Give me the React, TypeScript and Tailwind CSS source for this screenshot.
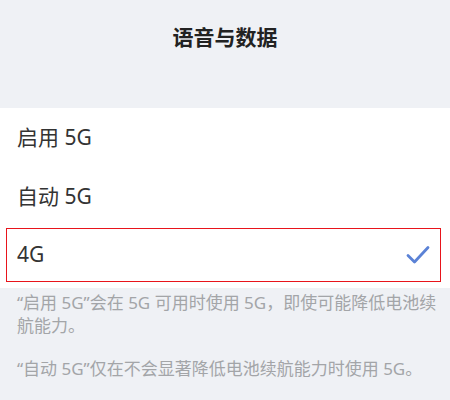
const font = { fontFamily: '"Noto Sans", "Noto Sans CJK SC", sans-serif' };

function Check() {
  return (
    <svg width="24" height="20" viewBox="0 0 24 20" fill="none">
      <path
        d="M2 10.5 L8.5 17 L22 2.5"
        stroke="#5b82d6"
        strokeWidth="2.8"
        strokeLinecap="round"
        strokeLinejoin="round"
      />
    </svg>
  );
}

const options = [
  { label: "启用 5G", selected: false },
  { label: "自动 5G", selected: false },
  { label: "4G", selected: true },
];

export default function App() {
  return (
    <div
      className="w-[450px] h-[400px] overflow-hidden bg-[#eff1f5]"
      style={font}
    >
      <div className="h-[108px] pt-[24px] text-center">
        <h1 className="text-[21px] leading-[26px] font-bold text-[#222]">
          语音与数据
        </h1>
      </div>

      <div className="bg-white">
        {options.map((o, i) => (
          <div
            key={o.label}
            className={
              i === 2
                ? "relative h-[62px] pb-[4px] pl-[17px] pr-[20px] flex items-center justify-between"
                : "h-[59px] pl-[17px] pr-[20px] flex items-center justify-between"
            }
          >
            <span className="text-[21px] text-[#333]">{o.label}</span>
            {o.selected && <Check />}
            {o.selected && (
              <span className="absolute left-[6px] right-[9px] top-[2px] bottom-[6px] border border-[#e8141b]" />
            )}
          </div>
        ))}
      </div>

      <div className="pt-[3px] pl-[17px] pr-[10px] text-[17px] leading-[23px] text-[#a3a5a8]">
        <p>“启用 5G”会在 5G 可用时使用 5G，即使可能降低电池续航能力。</p>
        <p className="mt-[20px]">“自动 5G”仅在不会显著降低电池续航能力时使用 5G。</p>
      </div>
    </div>
  );
}
